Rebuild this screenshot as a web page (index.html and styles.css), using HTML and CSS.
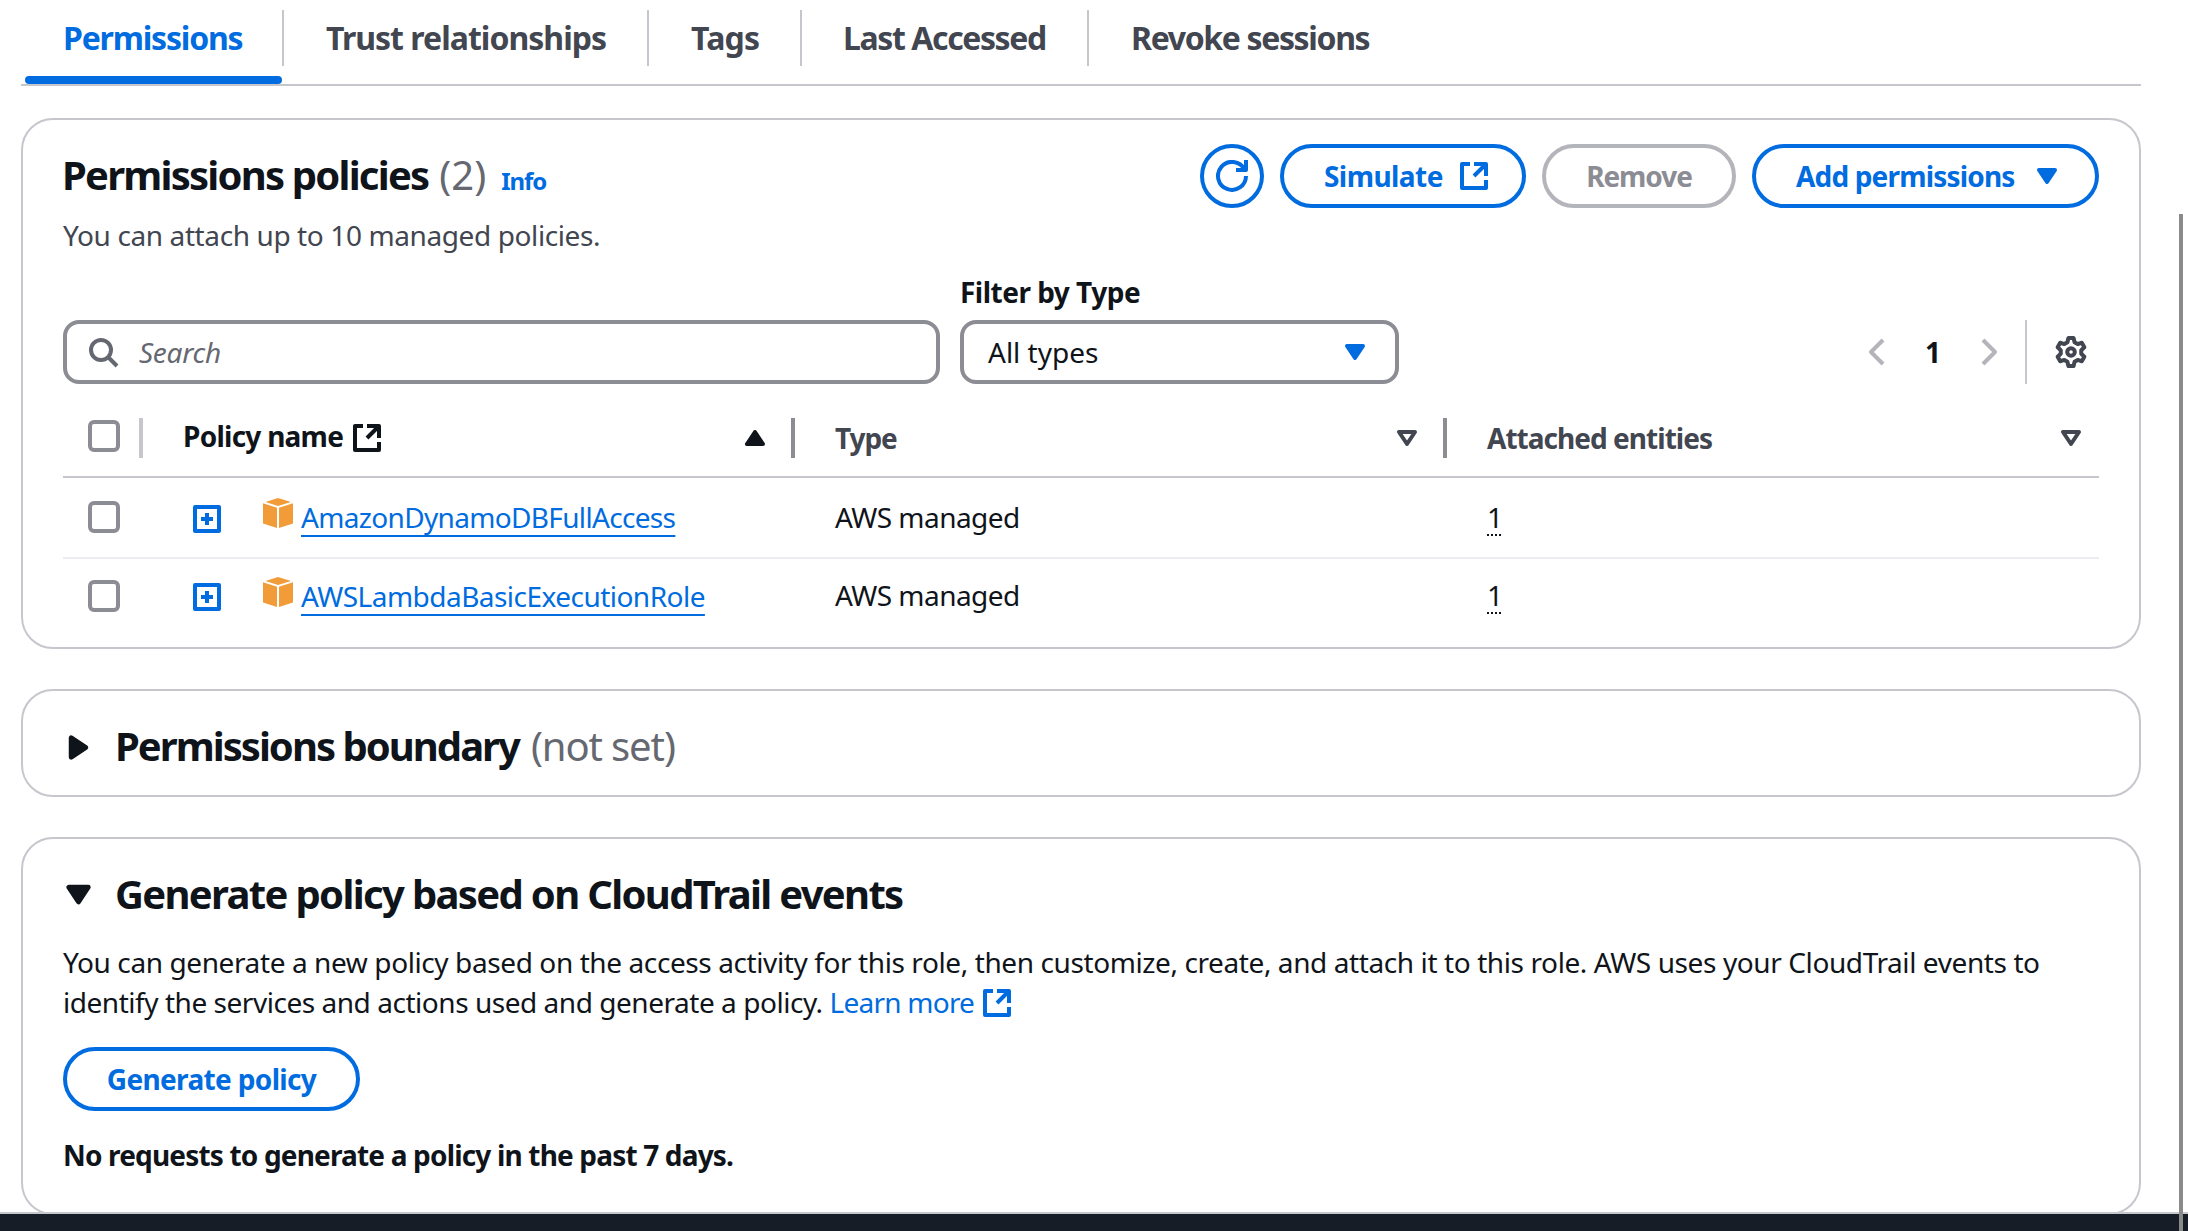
FILE: index.html
```html
<!DOCTYPE html>
<html lang="en">
<head>
<meta charset="utf-8">
<title>Permissions</title>
<link rel="stylesheet" href="styles.css">
</head>
<body>
<svg class="defs" width="0" height="0">
  <symbol id="external" viewBox="0 0 16 16"><path d="M6 2H2v12h12v-4M8 2h6v6M8 8l6-6"/></symbol>
  <symbol id="caret-down" viewBox="0 0 16 16"><path class="solid" d="M4 5h8l-4 6-4-6Z"/></symbol>
  <symbol id="caret-up" viewBox="0 0 16 16"><path class="solid" d="M4 11h8L8 5l-4 6Z"/></symbol>
  <symbol id="caret-right" viewBox="0 0 16 16"><path class="solid" d="M5 4v8l6-4-6-4Z"/></symbol>
  <symbol id="sort" viewBox="0 0 16 16"><path d="M4 5h8l-4 6-4-6Z"/></symbol>
  <symbol id="expand" viewBox="0 0 16 16"><path d="M2 2h12v12H2zM8 5v6M5 8h6"/></symbol>
  <symbol id="cube" viewBox="0 0 30 30"><path d="M15 0 28 4 15 8 2.500 4ZM0 5.200l14 4.600V30L0 25.600ZM30 5.200 16 9.800V30l14-4.400Z"/></symbol>
</svg>
<main class="page">
  <nav class="tabs">
    <a class="tab tab-permissions active"><span class="tab-label">Permissions</span></a>
    <a class="tab tab-trust"><span class="tab-label">Trust relationships</span></a>
    <a class="tab tab-tags"><span class="tab-label">Tags</span></a>
    <a class="tab tab-accessed"><span class="tab-label">Last Accessed</span></a>
    <a class="tab tab-revoke"><span class="tab-label">Revoke sessions</span></a>
  </nav>

  <section class="card policies">
    <header class="card-header">
      <div class="titles">
        <div class="title-line">
          <h2 class="heading policies-heading">Permissions policies</h2>
          <span class="counter">(2)</span>
          <a class="info">Info</a>
        </div>
        <p class="description">You can attach up to 10 managed policies.</p>
      </div>
      <div class="actions">
        <button class="button round"><svg class="icon" viewBox="0 0 16 16"><path d="M10 5h5V0"/><path d="M15 8a7 7 0 1 1-.8-3.300"/></svg></button>
        <button class="button simulate"><span>Simulate</span><svg class="icon"><use href="#external"/></svg></button>
        <button class="button remove" disabled><span>Remove</span></button>
        <button class="button add"><span>Add permissions</span><svg class="icon"><use href="#caret-down"/></svg></button>
      </div>
    </header>

    <div class="filters">
      <div class="field search"><svg class="icon" viewBox="0 0 16 16"><circle cx="7" cy="7" r="5"/><path d="m15 15-4.500-4.500"/></svg><span>Search</span></div>
      <div class="type-filter">
        <label class="filter-label">Filter by Type</label>
        <div class="field select"><span>All types</span><svg class="icon"><use href="#caret-down"/></svg></div>
      </div>
      <div class="pagination">
        <svg class="icon page-arrow" viewBox="0 0 16 16"><path d="M11 2 5 8l6 6"/></svg>
        <span class="page-number">1</span>
        <svg class="icon page-arrow" viewBox="0 0 16 16"><path d="m5 2 6 6-6 6"/></svg>
        <div class="preferences"><svg class="icon" viewBox="0 0 16 16"><path d="M6.220 3.110 6.710 1.020H9.290L9.780 3.110 11.340 4.020 13.400 3.390 14.690 5.630 13.120 7.100V8.900L14.690 10.370 13.400 12.610 11.340 11.980 9.780 12.890 9.290 14.980H6.710L6.220 12.890 4.660 11.980 2.600 12.610 1.310 10.370 2.880 8.900V7.100L1.310 5.630 2.600 3.390 4.660 4.020Z"/><circle cx="8" cy="8" r="1.900"/></svg></div>
      </div>
    </div>

    <div class="table">
      <div class="row head">
        <div class="cell select-cell"><i class="checkbox"></i></div>
        <div class="cell name-head"><span>Policy name</span><svg class="icon"><use href="#external"/></svg><svg class="icon sorter"><use href="#caret-up"/></svg></div>
        <div class="cell type-head"><span>Type</span><svg class="icon sorter"><use href="#sort"/></svg></div>
        <div class="cell entities-head"><span>Attached entities</span><svg class="icon sorter"><use href="#sort"/></svg></div>
      </div>
      <div class="row first">
        <div class="cell select-cell"><i class="checkbox"></i></div>
        <div class="cell name-cell"><svg class="icon expander"><use href="#expand"/></svg><svg class="cube"><use href="#cube"/></svg><a class="policy-link dynamo">AmazonDynamoDBFullAccess</a></div>
        <div class="cell type-cell">AWS managed</div>
        <div class="cell"><span class="entity-count">1</span></div>
      </div>
      <div class="row last">
        <div class="cell select-cell"><i class="checkbox"></i></div>
        <div class="cell name-cell"><svg class="icon expander"><use href="#expand"/></svg><svg class="cube"><use href="#cube"/></svg><a class="policy-link lambda">AWSLambdaBasicExecutionRole</a></div>
        <div class="cell type-cell">AWS managed</div>
        <div class="cell"><span class="entity-count">1</span></div>
      </div>
    </div>
  </section>

  <section class="card boundary">
    <div class="expand-header"><svg class="icon toggle"><use href="#caret-right"/></svg><h2 class="heading boundary-heading">Permissions boundary</h2><span class="not-set">(not set)</span></div>
  </section>

  <section class="card generate">
    <div class="expand-header"><svg class="icon toggle"><use href="#caret-down"/></svg><h2 class="heading generate-heading">Generate policy based on CloudTrail events</h2></div>
    <p class="explanation">You can generate a new policy based on the access activity for this role, then customize, create, and attach it to this role. AWS uses your CloudTrail events to<br><span class="explanation-end">identify the services and actions used and generate a policy. </span><a class="learn">Learn more <svg class="icon"><use href="#external"/></svg></a></p>
    <button class="button generate-button"><span>Generate policy</span></button>
    <p class="requests">No requests to generate a policy in the past 7 days.</p>
  </section>
</main>
<footer class="footer"></footer>
<div class="scroll-thumb"></div>
</body>
</html>
```

FILE: styles.css
```css
* { box-sizing: border-box; }
body {
  position: relative;
  height: 1231px;
  margin: 0;
  overflow: hidden;
  background: #fff;
  color: #0f141a;
  font: 400 28px/40px "Noto Sans", sans-serif;
}
h2, p { margin: 0; }
.defs { display: none; }
.icon {
  flex: none;
  width: 32px;
  height: 32px;
  fill: none;
  stroke: currentColor;
  stroke-width: 2;
  stroke-linejoin: round;
}
.solid { fill: currentColor; }

.page { height: 1212px; overflow: hidden; padding: 0 47px 0 21px; }

.tabs { display: flex; height: 86px; border-bottom: 2px solid #c6c6cd; }
.tab { padding-top: 10px; color: #424650; font-weight: 700; font-size: 32px; }
.tab-label { display: block; height: 56px; padding-left: 42px; border-right: 2px solid #c6c6cd; line-height: 55px; white-space: nowrap; }
.tab-permissions { width: 263px; letter-spacing: -0.0375em; }
.tab-trust { width: 365px; letter-spacing: -0.0306em; }
.tab-tags { width: 153px; letter-spacing: -0.0239em; }
.tab-accessed { width: 287px; letter-spacing: -0.044em; }
.tab-accessed .tab-label { padding-left: 41px; }
.tab-revoke { letter-spacing: -0.0426em; }
.tab-revoke .tab-label { border: 0; }
.tab.active { color: #006ce0; }
.tab.active::after { content: ""; display: block; height: 8px; margin: 10px 2px 0 4px; border-radius: 4px; background: #006ce0; }

.card { border: 2px solid #c6c6cd; border-radius: 32px; padding: 0 40px; }
.heading { font-size: 40px; line-height: 48px; font-weight: 700; white-space: nowrap; }

.policies { height: 531px; margin-top: 32px; padding-top: 24px; }
.card-header { display: flex; justify-content: space-between; align-items: flex-start; }
.titles { padding-top: 7px; }
.title-line { display: flex; align-items: baseline; height: 48px; margin-left: -1px; }
.policies-heading { letter-spacing: -0.0445em; }
.counter { margin-left: 11px; color: #656871; font-size: 40px; line-height: 48px; }
.info { margin-left: 15px; color: #006ce0; font-size: 24px; font-weight: 700; letter-spacing: -0.0448em; }
.description { margin-top: 16px; color: #424650; letter-spacing: -0.014em; }

.actions { display: flex; gap: 16px; }
.button {
  display: flex;
  align-items: center;
  justify-content: center;
  height: 64px;
  padding: 0;
  border: 4px solid #006ce0;
  border-radius: 32px;
  background: #fff;
  color: #006ce0;
  font: 700 28px/40px "Noto Sans", sans-serif;
}
.button span { padding-bottom: 1px; }
.button.round { width: 64px; }
.button.simulate { width: 246px; justify-content: space-between; padding: 0 32px 0 40px; letter-spacing: -0.02em; }
.button.remove { width: 194px; border-color: #b4b4bb; color: #8c8c94; letter-spacing: -0.0379em; }
.button.add { width: 347px; justify-content: space-between; padding: 0 32px 0 40px; letter-spacing: -0.0295em; }

.filters { display: flex; align-items: flex-end; margin-top: 17px; }
.field { display: flex; align-items: center; height: 64px; border: 4px solid #8c8c94; border-radius: 16px; }
.field span { padding-bottom: 1px; }
.search { width: 877px; padding-left: 20px; gap: 20px; color: #656871; font-style: italic; letter-spacing: -0.01em; }
.type-filter { width: 439px; margin-left: 20px; }
.filter-label { display: block; margin-bottom: 8px; font-weight: 700; letter-spacing: -0.018em; }
.select { justify-content: space-between; padding: 0 24px; }
.select .icon { color: #006ce0; }
.pagination { display: flex; align-items: center; height: 64px; margin-left: auto; }
.page-arrow { color: #b4b4bb; }
.page-number { width: 80px; padding-bottom: 1px; text-align: center; font-weight: 700; }
.preferences { display: flex; align-items: center; height: 64px; margin-left: 20px; padding: 0 12px 0 28px; border-left: 2px solid #c6c6cd; color: #424650; }

.row { display: grid; grid-template-columns: 80px 652px 652px 652px; }
.cell { display: flex; align-items: flex-start; height: 40px; white-space: nowrap; }
.cell + .cell { padding-left: 40px; }
.checkbox { width: 32px; height: 32px; border: 4px solid #8c8c94; border-radius: 6px; }
.select-cell { padding-left: 25px; }
.head { height: 94px; padding-top: 34px; border-bottom: 2px solid #c6c6cd; color: #424650; font-weight: 700; }
.head .cell { border-right: 4px solid #8c8c94; }
.head .select-cell { padding-top: 2px; border-color: #c6c6cd; }
.head .entities-head { border: 0; letter-spacing: -0.0345em; padding-right: 12px; }
.head .name-head { color: #0f141a; }
.name-head span { margin-top: -2px; letter-spacing: -0.0265em; }
.name-head .icon:not(.sorter) { margin: 4px 0 0 8px; }
.type-head { letter-spacing: -0.039em; }
.sorter { margin: 4px 20px 0 auto; }
.entities-head .sorter { margin-right: 0; }
.first { height: 81px; padding-top: 19px; border-bottom: 2px solid #ebebf0; }
.last { height: 88px; padding-top: 17px; }
.first .select-cell, .last .select-cell { padding-top: 4px; }
.row .name-cell { padding-left: 48px; }
.expander { margin-top: 6px; color: #006ce0; }
.last .expander { margin-top: 5px; }
.cube { flex: none; width: 30px; height: 30px; margin: 1px 8px 0 40px; fill: #f19c38; }
.policy-link { color: #006ce0; text-decoration: underline solid 2px; text-underline-offset: 7px; text-decoration-skip-ink: none; }
.dynamo { letter-spacing: -0.0238em; }
.lambda { letter-spacing: -0.0189em; }
.type-cell { letter-spacing: -0.0192em; }
.last .type-cell, .last .type-cell + .cell { margin-top: -1px; }
.entity-count { text-decoration: underline dotted 2px; text-underline-offset: 6px; text-decoration-skip-ink: none; }

.boundary { height: 108px; margin-top: 40px; padding-top: 31px; }
.expand-header { display: flex; }
.toggle { width: 39px; height: 39px; margin: 6px 17px 0 -4px; }
.boundary-heading { letter-spacing: -0.0494em; }
.not-set { margin-left: 12px; color: #656871; font-size: 40px; line-height: 48px; letter-spacing: -0.0279em; }

.generate { height: 378px; margin-top: 40px; padding-top: 31px; }
.generate .toggle { margin-top: 5px; }
.generate-heading { letter-spacing: -0.0415em; }
.explanation { margin-top: 24px; letter-spacing: -0.0143em; white-space: nowrap; }
.explanation-end { letter-spacing: -0.0165em; }
.learn { color: #006ce0; letter-spacing: -0.027em; }
.learn .icon { vertical-align: -6px; }
.generate-button { width: 297px; margin-top: 25px; letter-spacing: -0.0233em; }
.requests { margin-top: 24px; font-weight: 700; letter-spacing: -0.0295em; }

.footer { height: 19px; border-top: 2px solid #c6c6cd; background: #161d26; }
.scroll-thumb { position: absolute; top: 214px; left: 2179px; width: 4px; height: 1017px; background: #8a8a8a; }
```
